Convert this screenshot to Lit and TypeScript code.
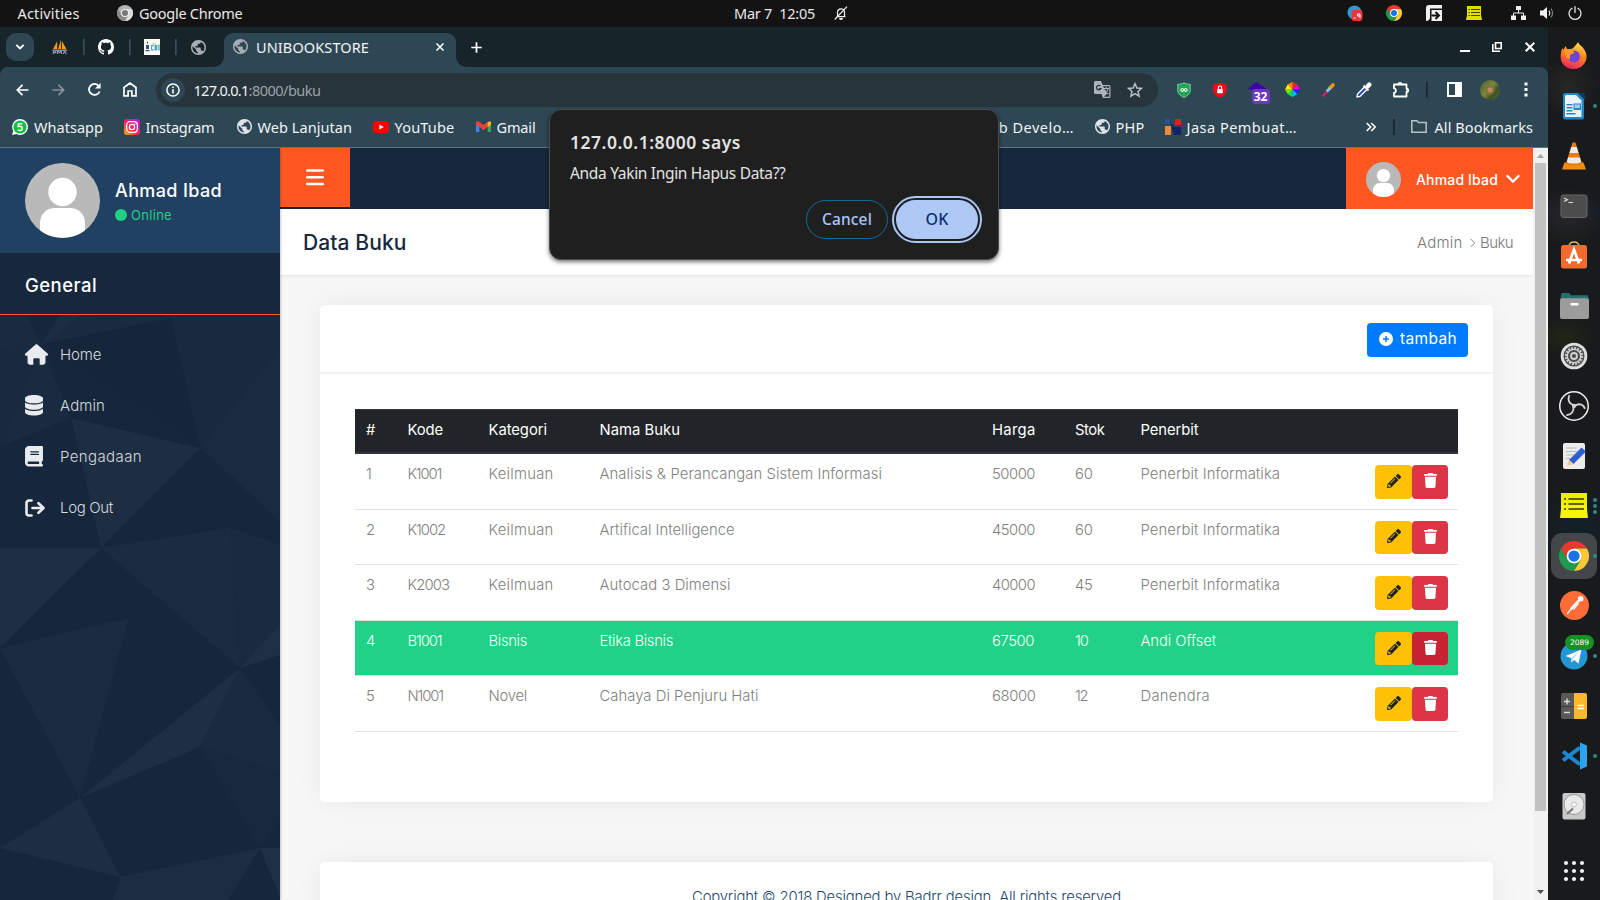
import { LitElement, html, css, svg } from "lit";
import { customElement, property } from "lit/decorators.js";
import { classMap } from "lit/directives/class-map.js";

/** Single line of text tracked so that it spans a given width. */
@customElement("fit-text")
class FitText extends LitElement {
  static styles = css`
    :host { display: inline-block; white-space: pre; justify-self: start; flex: none; }
  `;
  @property({ type: Number }) w = 0;
  updated() {
    this.style.letterSpacing = "0";
    const n = (this.textContent || "").length;
    const natural = this.getBoundingClientRect().width;
    if (this.w && n) this.style.letterSpacing = `${((this.w - natural) / n).toFixed(3)}px`;
  }
  render() { return html`<slot></slot>`; }
}

const t = (w: number, s: string) => html`<fit-text .w=${w}>${s}</fit-text>`;
const icon = (w: number, h: number, box: string, body: unknown) =>
  html`<svg width=${w} height=${h} viewBox=${box} fill="none">${body}</svg>`;

const chromeBody = (r: string, y: string, g: string, b: string) => svg`
  <path fill=${r} d="M12 6h10.4A12 12 0 0 0 1.6 6l5.2 9z"/>
  <path fill=${y} d="M12 6h10.4A12 12 0 0 1 12 24l5.2-9z"/>
  <path fill=${g} d="M6.8 15 1.6 6A12 12 0 0 0 12 24l5.2-9z"/>
  <circle cx="12" cy="12" r="5.9" fill="#fff"/><circle cx="12" cy="12" r="4.5" fill=${b}/>`;
const chrome = (s: number) => icon(s, s, "0 0 24 24", chromeBody("#e33b2e", "#fcc934", "#1e9b4c", "#1a73e8"));

const globe = (c: string) => icon(15, 15, "2 2 20 20", svg`<path fill=${c} d="M12 2C6.48 2 2 6.48 2 12s4.48 10 10 10 10-4.48 10-10S17.52 2 12 2zm-1 17.93c-3.95-.49-7-3.85-7-7.93 0-.62.08-1.21.21-1.79L9 15v1c0 1.1.9 2 2 2v1.93zm6.9-2.54c-.26-.81-1-1.39-1.9-1.39h-1v-3c0-.55-.45-1-1-1H8v-2h2c.55 0 1-.45 1-1V7h2c1.1 0 2-.9 2-2v-.41c2.93 1.19 5 4.06 5 7.41 0 2.08-.8 3.97-2.1 5.39z"/>`);

const github = icon(16, 16, "0 0 16 16", svg`<path fill="#fff" d="M8 0C3.58 0 0 3.58 0 8c0 3.54 2.29 6.53 5.47 7.59.4.07.55-.17.55-.38 0-.19-.01-.82-.01-1.49-2.01.37-2.53-.49-2.69-.94-.09-.23-.48-.94-.82-1.13-.28-.15-.68-.52-.01-.53.63-.01 1.08.58 1.23.82.72 1.21 1.87.87 2.33.66.07-.52.28-.87.51-1.07-1.78-.2-3.64-.89-3.64-3.95 0-.87.31-1.59.82-2.15-.08-.2-.36-1.02.08-2.12 0 0 .67-.21 2.2.82.64-.18 1.32-.27 2-.27s1.36.09 2 .27c1.53-1.04 2.2-.82 2.2-.82.44 1.1.16 1.92.08 2.12.51.56.82 1.27.82 2.15 0 3.07-1.87 3.75-3.65 3.95.29.25.54.73.54 1.48 0 1.07-.01 1.93-.01 2.2 0 .21.15.46.55.38A8.01 8.01 0 0 0 16 8c0-4.42-3.58-8-8-8z"/>`);
const pma = icon(16, 16, "0 0 17 16", svg`<path fill="#f89c0e" d="M1 10.5 5.5 2v8.500zM6.500 10.500 9.500 0v10.500zM10.500 10.500V1.500l5 9z"/><path stroke="#8d90b4" stroke-width="1.300" d="M.5 11.500h15.500M1.500 15.500v-3.500h2.500v2H2m4 1.500v-3.500l2 2 2-2v3.500m2 0 1.500-3.500 1.500 3.500"/>`);
const whiteTile = icon(16, 16, "0 0 16 16", svg`<path fill="#fdfdfd" d="M0 0h16v16H0z"/><path fill="#34507c" d="M3 2.500h1v2H3zM2 6h3v4H2zM1.500 11h4v1.200h-4z"/><path fill="#4fa3cf" d="M7 6h2.500v1.500H8V10h1.500v1.500H7zM10.500 6H13v5.500h-2.500z"/><path fill="#7fcbd0" d="M13.500 5.500H16v6h-2.500z"/><path fill="#a8cf5a" d="M8 4.500h4v1H8zM13 6h2v1h-2z"/>`);
const sep = (c: string) => icon(2, 16, "0 0 2 16", svg`<path fill=${c} d="M0 0h1.700v16H0z"/>`);
const bell = icon(14, 15, "0 0 14 15", svg`<path stroke="#eee" stroke-width="1.200" d="M2.500 10.700h9M3.500 10.500V6a3.600 3.600 0 0 1 7-.5v5M13 .7.700 13.500"/><path fill="#eee" d="M5 12h4a2 2 0 0 1-4 0z"/>`);

const avatar = (s: number) => icon(s, s, "0 0 75 75", svg`
  <circle cx="37.500" cy="37.500" r="37.500" fill="#b9b9b9"/><circle cx="37.500" cy="29" r="14.200" fill="#fff"/>
  <path fill="#fff" d="M15 67.300V60c0-9 7-15 15-15h15c8 0 15 6 15 15v7.300a37.500 37.500 0 0 1-45 0z"/>`);

const faHouse = icon(23, 21, "0 0 576 512", svg`<path fill="#e9ebee" d="M575.8 255.500c0 18-15 32.100-32 32.100h-32l.7 160.200c0 35-28 64-64 64H368V384c0-17.700-14.300-32-32-32h-96c-17.700 0-32 14.300-32 32v128H128c-36 0-64-29-64-64V287.600H32c-18 0-32-14-32-32.100 0-9 3-17 10-24L266.400 8c7-7 15-8 22-8s15 2 21 7L564.800 231.500c8 7 12 15 11 24z"/>`);
const faDb = icon(18, 20.500, "0 0 448 512", svg`<path fill="#e9ebee" d="M448 80v48c0 44.200-100.300 80-224 80S0 172.200 0 128V80C0 35.800 100.300 0 224 0S448 35.800 448 80zM393.200 214.700c20.800-7.400 39.900-16.900 54.800-28.600V288c0 44.200-100.300 80-224 80S0 332.200 0 288V186.100c14.900 11.800 34 21.200 54.800 28.600C99.700 230.700 159.500 240 224 240s124.300-9.300 169.200-25.300zM0 346.100c14.900 11.800 34 21.200 54.800 28.600C99.700 390.700 159.500 400 224 400s124.300-9.300 169.200-25.300c20.800-7.400 39.900-16.900 54.800-28.600V432c0 44.200-100.300 80-224 80S0 476.200 0 432V346.100z"/>`);
const faBook = icon(18, 20.500, "0 0 448 512", svg`<path fill="#e9ebee" d="M96 0C43 0 0 43 0 96V416c0 53 43 96 96 96H384h32c17.700 0 32-14.300 32-32s-14.300-32-32-32V384c17.700 0 32-14.300 32-32V32c0-17.700-14.300-32-32-32H384 96zm0 384H352v64H96c-17.700 0-32-14.300-32-32s14.300-32 32-32zm32-240c0-8.800 7.200-16 16-16H336c8.800 0 16 7.200 16 16s-7.200 16-16 16H144c-8.800 0-16-7.200-16-16zm16 48H336c8.800 0 16 7.200 16 16s-7.200 16-16 16H144c-8.800 0-16-7.200-16-16s7.200-16 16-16z"/>`);
const faOut = icon(20, 18, "0 0 20 18", svg`<path stroke="#e9ebee" stroke-width="2.600" stroke-linecap="round" stroke-linejoin="round" d="M6.500 1.500H4A2.500 2.500 0 0 0 1.500 4v10A2.500 2.500 0 0 0 4 16.500h2.500M7.500 9H18M13.500 4.200 18.500 9l-5 4.800"/>`);
const pencil = icon(14, 14, "0 0 512 512", svg`<path fill="#212529" d="M497.900 142.100l-46.100 46.100c-4.700 4.700-12.300 4.700-17 0l-111-111c-4.700-4.700-4.700-12.300 0-17l46.100-46.100c18.700-18.700 49.100-18.700 67.900 0l60.100 60.100c18.800 18.700 18.800 49.100 0 67.900zM284.200 99.800L21.600 362.400.4 483.900c-2.900 16.400 11.400 30.600 27.800 27.800l121.500-21.300 262.600-262.600c4.700-4.700 4.700-12.300 0-17l-111-111c-4.800-4.700-12.400-4.700-17.100 0zM124.100 339.900c-5.500-5.500-5.500-14.300 0-19.800l154-154c5.500-5.500 14.300-5.500 19.800 0s5.500 14.300 0 19.800l-154 154c-5.500 5.500-14.300 5.500-19.800 0zM88 424h48v36.300l-64.500 11.300-31.100-31.100L51.700 376H88v48z"/>`);
const trash = icon(13, 15, "0 0 448 512", svg`<path fill="#fff" d="M135.200 17.700L128 32H32C14.300 32 0 46.300 0 64S14.300 96 32 96H416c17.700 0 32-14.300 32-32s-14.300-32-32-32H320l-7.200-14.300C307.400 6.800 296.300 0 284.200 0H163.800c-12.100 0-23.200 6.800-28.600 17.700zM416 128H32L53.200 467c1.600 25.300 22.600 45 47.900 45H346.900c25.300 0 46.300-19.700 47.900-45L416 128z"/>`);

const shield = (a: string, b: string, mark: unknown) => icon(14, 16, "0 0 15 17", svg`<path fill=${a} stroke=${b} stroke-width="1" d="M7.500.8C5.500 2 3 2.400.8 2.400v6c0 4 3 6.600 6.700 8 3.700-1.400 6.700-4 6.700-8v-6C12 2.400 9.500 2 7.500.8z"/>${mark}`);

/* ---- dock icons, each drawn in a 28 unit square ---- */
const d = (body: unknown, s = 28) => icon(s, s, "0 0 28 28", body);
const dockIcons: { body: unknown; dots?: number; active?: boolean; badge?: string }[] = [
  { body: d(svg`<defs><linearGradient id="ff" x1=".7" y1="0" x2=".4" y2="1"><stop offset="0" stop-color="#ffe14a"/><stop offset=".45" stop-color="#ff8a1e"/><stop offset="1" stop-color="#f0245e"/></linearGradient></defs>
    <path fill="url(#ff)" d="M18 0c1 3 4 4 5.500 6.500 4 5 4 11 .5 15.500-4 5.500-12 6.500-17.500 3C1 22 0 16 1 11c.3-2.500 1-4 1.500-5l1 2 2-4 1.500 3h4c2-.5 3-2 4-3 1-1.500 2.500-2.500 3-4z"/>
    <circle cx="14" cy="14.500" r="6" fill="#7143d8"/><path fill="#ff9a1f" d="M5 9c3-1.500 6-1 9.500 1-1 2-4 2-4.500 3.500 0 2 0 3-.5 4C6 16 4.500 12.500 5 9z"/>`) },
  { dots: 1, body: d(svg`<path fill="#2387bf" d="M5 1h13l6 6v18.500a2 2 0 0 1-2 2H5a2 2 0 0 1-2-2V3a2 2 0 0 1 2-2z"/><path fill="#e9f3f9" d="M6 3h10l5.500 5.500V25H5V4z"/><path fill="#0d3d5e" d="M18 1h7v7z"/><path fill="#2a83bb" d="M6.500 12h6v1.400h-6zm0 3h6v1.400h-6zm0 3h6v1.400h-6zm0 3h9v1.400h-9zM13.500 11.500h7.500V18h-7.500z"/><path fill="#9cd0ee" d="M14.500 12.500H20V16h-5.500z"/>`) },
  { body: d(svg`<path fill="#f28b13" d="M4.500 20.500h19l2.500 7H2z"/><path fill="#e87b0a" d="M12.500.5h3L22 21.500c-3 2.500-13 2.500-16 0z"/><path fill="#ececec" d="M11.300 5h5.400l1.800 6h-9zM8.200 15.500h11.600l1.400 4.500c-3 2-11.500 2-14.400 0z"/>`) },
  { body: d(svg`<rect x="1" y="3" width="26" height="22.500" rx="2.500" fill="#4c4c4c" stroke="#686868"/><path stroke="#ddd" stroke-width="1.200" d="m4 6 3.500 1.700L4 9.500M8.500 10.500h4.500"/>`) },
  { body: d(svg`<path stroke="#d9bd8b" stroke-width="1.500" d="M9 4.500c0-6 10-6 10 0"/><rect x="1" y="3" width="26" height="23.500" rx="2.500" fill="#f26a2e"/><path stroke="#fff" stroke-width="2.700" d="m9 21.500 5-14 5 14M6 18h16"/>`) },
  { body: d(svg`<path fill="#24706c" d="M1 3.500A1.500 1.500 0 0 1 2.500 2h6L11 4h15a1.500 1.500 0 0 1 1.500 1.500V12H0z"/><rect y="7" width="28" height="20" rx="2" fill="#9c9c9c"/><rect x="10" y="11.500" width="8" height="2.400" rx="1" fill="#fff"/>`, 29) },
  { body: d(svg`<circle cx="14" cy="14" r="13.300" fill="#dedede"/><circle cx="14" cy="14" r="10.500" fill="#4b4b4b"/><circle cx="14" cy="14" r="8" stroke="#d2d2d2" stroke-width="2.200" stroke-dasharray="1.900 1.240"/><circle cx="14" cy="14" r="6.700" stroke="#d2d2d2" stroke-width="1.300"/><circle cx="14" cy="14" r="3" stroke="#d2d2d2" stroke-width="1.800"/>`) },
  { body: d(svg`<circle cx="14" cy="14" r="13.300" fill="#1b1b1d" stroke="#f2f2f2" stroke-width="1.400"/><path stroke="#d5d5d5" stroke-width="1.700" stroke-linecap="round" d="M13 13C9.500 12 8 8 9.500 4.500M13.500 15c.5 4-2 7-6 7.500M15.500 13.500c4-2.500 7.500-.5 8.500 2.500"/><circle cx="14" cy="14" r="2" fill="#d5d5d5"/>`, 30) },
  { body: d(svg`<rect x="3" y="1" width="22" height="26" rx="2" fill="#ececec"/><path stroke="#bbb" stroke-width="1.200" d="M6 6h11M6 9.500h11M6 13h8M6 16.500h6"/><path fill="#2d5fd0" d="m21.500 5.500 4.500 4L13.500 22 9 18z"/><path fill="#f4c68a" d="m9 18 4.500 4L7 24z"/>`) },
  { dots: 3, body: d(svg`<path fill="#f6f600" d="M1 1h26v16l1 9H0l1-9z"/><path fill="#dede00" d="M1 1h26v12H1z" opacity=".35"/><path stroke="#333300" stroke-width="1.400" d="M4 7h2M8.500 7H24M4 12h2M8.500 12H24M4 17h2M8.500 17H24"/>`) },
  { dots: 1, active: true, body: chrome(30) },
  { body: d(svg`<circle cx="14" cy="14" r="14" fill="#ff6c37"/><circle cx="20" cy="7.500" r="2.700" fill="#fff"/><path stroke="#fff" stroke-width="2.600" stroke-linecap="round" d="m17.500 10-6.500 7"/><path stroke="#fff" stroke-width="1.200" d="m18 12-5 6M11 17l-4 5"/>`, 29) },
  { dots: 1, badge: "2089", body: d(svg`<circle cx="14" cy="14" r="13.500" fill="#2496d3"/><path fill="#fff" d="m5.500 14 16-6.500-3 14-4.500-3.500-2.500 2.500-.5-4.500z"/><path fill="#b9d9ec" d="m11 16 8-6.500-6 7.500-1.500 3.500z"/>`) },
  { body: d(svg`<path fill="#595959" d="M3 1h11v26H3a2 2 0 0 1-2-2V3a2 2 0 0 1 2-2z"/><path fill="#fbb829" d="M14 1h11a2 2 0 0 1 2 2v22a2 2 0 0 1-2 2H14z"/><path stroke="#404040" d="M1 14.500h13"/><path stroke="#d8d8d8" stroke-width="1.400" d="M4 9.500h6M7 6.500v6M4 20.500h6"/><path stroke="#fff" stroke-width="1.400" d="M17.500 13.500H24M17.500 16.500H24"/>`) },
  { dots: 1, body: d(svg`<path stroke="#1d86d0" stroke-width="4" stroke-linejoin="round" d="M3 9.500 20 22.500M3 18.500 20 5.500"/><path fill="#2ba3ee" d="m20 .5 7 3v21l-7 3z"/>`) },
  { body: d(svg`<rect x="2.500" y="1" width="23" height="26.500" rx="2" fill="#c9c9c9"/><circle cx="14" cy="12.500" r="10" fill="#e9e9e9" stroke="#9a9a9a"/><circle cx="14" cy="12.500" r="2.500" fill="#fff" stroke="#bbb"/><path stroke="#777" stroke-width="2" d="m7 22 6-5.500"/>`) },
];

interface Cell { w: number; s: string }
const c = (w: number, s: string): Cell => ({ w, s });
const rows: { hot?: boolean; cells: Cell[] }[] = [
  { cells: [c(4.500, "1"), c(33.500, "K1001"), c(65, "Keilmuan"), c(282.500, "Analisis & Perancangan Sistem Informasi"), c(43, "50000"), c(17.500, "60"), c(139.500, "Penerbit Informatika")] },
  { cells: [c(8, "2"), c(37.500, "K1002"), c(65, "Keilmuan"), c(135, "Artifical Intelligence"), c(43, "45000"), c(17.500, "60"), c(139.500, "Penerbit Informatika")] },
  { cells: [c(8, "3"), c(41.500, "K2003"), c(65, "Keilmuan"), c(131, "Autocad 3 Dimensi"), c(43, "40000"), c(17.500, "45"), c(139.500, "Penerbit Informatika")] },
  { hot: true, cells: [c(8.500, "4"), c(34, "B1001"), c(38.500, "Bisnis"), c(73.500, "Etika Bisnis"), c(42, "67500"), c(13, "10"), c(75.500, "Andi Offset")] },
  { cells: [c(8, "5"), c(35.500, "N1001"), c(38.500, "Novel"), c(159, "Cahaya Di Penjuru Hati"), c(43.500, "68000"), c(12.500, "12"), c(69.500, "Danendra")] },
];
const heads = [c(11, "#"), c(35.500, "Kode"), c(58.500, "Kategori"), c(80.500, "Nama Buku"), c(43.500, "Harga"), c(29.500, "Stok"), c(58, "Penerbit")];

@customElement("app-root")
class AppRoot extends LitElement {
  static styles = css`
    :host { display: flex; flex-direction: column; width: 1600px; height: 900px; overflow: hidden; background: #17252b; font-family: "Noto Sans", "Open Sans", sans-serif; font-size: 14.5px; line-height: 20px; color: #f2f4f5; }
    * { box-sizing: border-box; }
    svg { display: block; flex: none; overflow: visible; }
    .topbar { display: grid; height: 27px; padding: 0 0 1px 17.5px; align-items: center; background: #131313; color: #e9e9e9; grid-template-columns: 99px 22.5px 595px 99.5px 513px 39px 40px 40px 45px 29px 28px 32px; }
    .desk { display: flex; flex: 1; min-height: 0; }
    .window { display: flex; flex-direction: column; width: 1548px; position: relative; background: #17252b; }
    .tabs { display: grid; flex: none; height: 40px; padding-left: 6px; align-items: center; grid-template-columns: 46px 31px 15px 31px 15px 31px 16px 33px 247px 989px 32px 33px 23px; }
    .search { display: grid; place-items: center; width: 28px; height: 28px; border-radius: 10px; background: #2d4753; }
    .tab { display: grid; grid-template-columns: 23px 180px 16px; align-items: center; align-self: end; width: 232px; height: 34px; padding: 0 0 7px 9px; border-radius: 9px 9px 0 0; background: #2e4754; position: relative; }
    .tab::before, .tab::after { content: ""; position: absolute; bottom: 0; width: 10px; height: 10px; }
    .tab::before { left: -10px; background: radial-gradient(circle at 0 0, transparent 9.5px, #2e4754 10px); }
    .tab::after { right: -10px; background: radial-gradient(circle at 100% 0, transparent 9.5px, #2e4754 10px); }
    .toolbar { display: grid; flex: none; height: 45px; padding-left: 15.5px; align-items: center; border-radius: 8px 8px 0 0; background: #2e4754; grid-template-columns: 36px 36px 35px 33px 1021px 36px 35px 37px 37px 34px 36px 34px 21px 33px 44px 20px; }
    .omni { display: grid; grid-template-columns: 33px 55px 845px 33px 20px; align-items: center; width: 1002px; height: 34px; padding-left: 5px; border-radius: 17px; background: #28343c; }
    .info { display: grid; place-items: center; width: 24px; height: 24px; border-radius: 50%; background: #2e4754; }
    .muted { color: #9aa3a8; }
    .purple { position: relative; }
    .count { position: absolute; left: 4px; top: 8px; width: 18px; height: 15px; border-radius: 3px; background: #6b39bd; color: #fff; font-size: 12px; line-height: 15px; font-weight: 700; text-align: center; }
    .photo { width: 20px; height: 20px; border-radius: 50%; background: radial-gradient(circle at 50% 50%, #b98c5e 0 2px, #8c6b42 3px, transparent 6px), linear-gradient(130deg, #3f5d2a, #7b8a3c 45%, #39501f 70%, #6f7d31); }
    .marks { display: grid; flex: none; height: 36px; padding: 0 0 6px 11.5px; align-items: center; background: #2e4754; grid-template-columns: 22.5px 89.5px 22px 91px 21px 115px 22px 81px 21px 458px 22px 118px 21px 49px 22px 179px 27px 18px 24px 110px; border-bottom: 1px solid #5f7179; }

    .page { display: flex; flex: 1; min-height: 0; font-family: Inter, "Open Sans", sans-serif; background: #f7f7f7; overflow: hidden; }
    .side { width: 280px; background: #16273c; flex: none; z-index: 1; box-shadow: 0 0 3px rgba(0, 0, 0, .35); }
    .profile { display: flex; gap: 15px; height: 105px; padding: 15px 25px; background: #214162; }
    .who { display: flex; flex-direction: column; gap: 4px; padding-top: 16px; font-size: 18px; font-weight: 500; line-height: 23px; color: #fff; }
    .online { display: flex; align-items: center; gap: 4px; font-size: 13px; line-height: 18px; color: #1fd085; font-weight: 400; }
    .dot { width: 12px; height: 12px; border-radius: 50%; background: #20cf84; }
    .general { height: 62px; padding: 20px 25px; font-size: 18.5px; font-weight: 500; line-height: 24px; color: #fff; background: #17283c; border-bottom: 1px solid #ff5722; }
    .menuwrap { position: relative; }
    .poly { position: absolute; inset: 0; }
    .menu { position: relative; display: flex; flex-direction: column; padding-top: 14px; }
    .item { display: grid; grid-template-columns: 35px 1fr; align-items: center; height: 51px; padding-left: 25px; font-size: 15px; font-weight: 300; color: #d6dade; }
    .main { width: 1253px; flex: none; display: flex; flex-direction: column; }
    .nav { display: flex; flex: none; justify-content: space-between; height: 61px; background: #17283e; }
    .burger { display: grid; place-items: center; width: 70px; height: 59px; background: #ff5722; }
    .user { display: grid; grid-template-columns: 50px 90px 20px; align-items: center; width: 187px; height: 61px; padding: 2px 0 0 20px; background: #ff5722; color: #fff; font-size: 14px; font-weight: 500; }
    .title { display: flex; flex: none; justify-content: space-between; align-items: center; height: 66px; padding: 1px 20px 0 23px; background: #fff; color: #17283e; font-size: 21px; line-height: 28px; font-weight: 450; box-shadow: 0 1px 3px rgba(0, 0, 0, .09); }
    .crumbs { display: grid; grid-template-columns: 53px 10px 33px; font-size: 15px; font-weight: 300; color: #777; }
    .content { display: flex; flex-direction: column; gap: 60px; padding: 30px 40px 0; }
    .card { height: 497px; border-radius: 5px; background: #fff; box-shadow: 0 0 30px rgba(0, 0, 0, .065); flex: none; }
    .cardhead { display: flex; justify-content: flex-end; height: 69px; padding: 18px 25px 0; border-bottom: 2px solid #f1f1f2; }
    .add { display: grid; grid-template-columns: 21px 60px; align-items: center; width: 101px; height: 34px; padding: 0 0 3px 12px; border-radius: 4px; background: #007bff; color: #fff; font-size: 15.5px; font-weight: 400; }
    .table { padding: 35px 35px 0; }
    .row { display: grid; grid-template-columns: 41.5px 81px 111px 392.5px 83px 65.5px 196.5px 121px; height: 55.6px; padding: 9px 0 0 11px; line-height: 22px; border-bottom: 1px solid #dee2e6; color: #808080; font-size: 14.8px; font-weight: 300; }
    .head { height: 45px; padding-top: 9px; background: #212529; border-top: 1px solid #32383e; border-bottom: 2px solid #32383e; color: #fff; font-weight: 400; }
    .hot { background: #20d187; color: #f4fffa; }
    .acts { display: flex; padding: 2px 0 0 38px; }
    .btn { display: grid; place-items: center; height: 33.5px; border-radius: 4px; padding-bottom: 2px; }
    .edit { width: 37px; background: #ffc107; }
    .del { width: 36px; background: #dc3545; }
    .hot .del { background: #c82333; }
    .foot { display: flex; justify-content: center; height: 90px; padding-top: 25px; border-radius: 5px; background: #fff; color: #24486c; font-size: 14.8px; font-weight: 300; box-shadow: 0 0 30px rgba(0, 0, 0, .065); }
    .scroll { display: flex; flex-direction: column; align-items: center; justify-content: space-between; width: 15px; background: #f1f1f1; padding: 5px 0 5px; }
    .thumb { width: 11px; height: 648px; margin: 5px 2px auto; background: #c1c1c1; }

    .dialog { position: absolute; left: 549px; top: 82px; width: 450px; height: 151px; display: flex; flex-direction: column; padding: 22px 16px 16px 20px; border: 1px solid #4b4c4d; border-radius: 12px; background: #1f1f1f; color: #e3e3e3; box-shadow: 0 2px 4px rgba(0, 0, 0, .55); }
    .says { font-size: 17.5px; font-weight: 600; line-height: 20px; height: 30px; }
    .ask { font-size: 15.5px; line-height: 22px; }
    .choices { display: flex; justify-content: flex-end; gap: 4px; margin-top: 12px; align-items: center; }
    .cancel { display: grid; place-items: center; width: 82px; height: 39px; padding-bottom: 2px; border: 1px solid #0e6c9c; border-radius: 20px; color: #a8c7fa; font-weight: 500; font-size: 15.5px; }
    .ok { display: grid; place-items: center; width: 90px; height: 47px; border: 2px solid #a8c7fa; border-radius: 24px; padding: 2px; }
    .okin { display: grid; place-items: center; width: 100%; height: 100%; padding-bottom: 2px; border-radius: 20px; background: #afc9f7; color: #0b2f71; font-weight: 500; font-size: 16px; }
    .choices fit-text { justify-self: center; }

    .dock { display: flex; flex-direction: column; align-items: center; width: 52px; padding-top: 3.5px; background: radial-gradient(ellipse 30px 30px at 20px 60px, #272727, transparent), radial-gradient(ellipse 34px 30px at 20px 190px, #252525, transparent), radial-gradient(ellipse 40px 20px at 24px 185px, #172036, transparent), radial-gradient(ellipse 30px 20px at 16px 310px, #222616, transparent), radial-gradient(ellipse 40px 50px at 30px 500px, #12212a, transparent), #191a1b; }
    .slot { display: grid; place-items: center; position: relative; flex: none; width: 46px; height: 50px; }
    .active::before { content: ""; position: absolute; inset: 2px 0; border-radius: 11px; background: #44474a; }
    .slot svg { position: relative; }
    .dots { position: absolute; right: 0; top: 0; height: 50px; display: flex; flex-direction: column; justify-content: center; gap: 2px; }
    .run { width: 4px; height: 4px; border-radius: 50%; background: #2f8a85; }
    .badge { position: absolute; left: 14px; top: 4px; width: 29px; height: 15px; border-radius: 8px; background: #149324; color: #fff; font: 500 7.5px/15px "DejaVu Sans", sans-serif; text-align: center; }
    .grid { margin-top: 30px; }
  `;

  private polys() {
    const p: [string, string][] = [
      ["0,0 27,0 41,30 0,34", "#1a2b40"], ["41,30 60,0 83,0", "#1c2e42"], ["41,30 171,3 83,0", "#1a2b40"],
      ["171,3 280,33 200,133", "#192a3f"], ["280,33 280,151 200,133", "#1a2c41"], ["171,3 160,0 280,0 280,33", "#182a3f"],
      ["41,30 71,103 0,132", "#192b40"], ["0,34 41,30 0,132", "#172a3f"], ["41,30 171,3 200,133", "#15263b"], ["71,103 200,133 101,233", "#1d2e43"],
      ["200,133 280,151 280,206", "#1a2c41"], ["0,132 71,103 101,233", "#16273d"], ["0,233 101,233 0,333", "#1d2f44"],
      ["101,233 231,213 240,353", "#1b2c42"], ["231,213 280,230 280,309 240,353", "#1a2b40"],
      ["240,353 280,309 280,340", "#1e3045"], ["0,333 129,303 80,483", "#1a2c41"], ["129,303 240,353 80,483", "#15273c"],
      ["240,353 200,432 80,483", "#1e2f44"], ["240,353 280,412 280,459 200,432", "#1a2b40"],
      ["80,483 120,562 0,533", "#1d2e43"], ["120,562 260,533 228,586 113,586", "#1b2d42"],
      ["260,533 280,533 280,582", "#1e3045"], ["200,432 280,459 280,505 260,533", "#17293e"],
    ];
    return html`<svg class="poly" width="280" height="585" viewBox="0 0 280 585">${p.map(([pts, f]) => svg`<polygon points=${pts} fill=${f}/>`)}</svg>`;
  }

  private topbar() {
    return html`<div class="topbar">
      ${t(62, "Activities")}
      ${icon(16, 16, "0 0 24 24", svg`<circle cx="12" cy="12" r="12" fill="#b3b3b3"/><path fill="#8a8a8a" d="M6.800 15 1.600 6A12 12 0 0 0 12 24l5-9z"/><path fill="#dcdcdc" d="M12 6h10.400A12 12 0 0 1 12 24l5.200-9z"/><circle cx="12" cy="12" r="6" fill="#eee"/><circle cx="12" cy="12" r="4.500" fill="#777"/>`)}
      ${t(103.500, "Google Chrome")}
      ${t(81, "Mar 7  12:05")}
      ${bell}
      ${icon(16, 16, "0 0 16 16", svg`<circle cx="7.500" cy="7.500" r="7" fill="#2f9bd6"/><rect x="4.500" y="5" width="11" height="11" rx="3" fill="#e53935"/><path stroke="#fff" stroke-width="1" d="M6.500 13h2M13 13V9h-2.500v2H13"/>`)}
      ${chrome(16)}
      ${icon(16, 16, "0 0 16 16", svg`<path fill="#f0f0f0" d="M3 0h13v3.500H4V12c0 2.500-1.500 4-4 4V3a3 3 0 0 1 3-3z"/><path fill="#f0f0f0" d="M5.500 5H16v11H5.500z"/><path stroke="#131313" stroke-width="2" d="M5.500 10.500h7M9.500 7l3.500 3.500L9.500 14"/>`)}
      ${icon(16, 16, "0 0 16 16", svg`<path fill="#e0e000" d="M1 1h14v9l1 5H0l1-5z"/><path stroke="#444400" stroke-width="1" d="M2.500 4.500h1.500M5 4.500h9M2.500 7.500h1.500M5 7.500h9M2.500 10.500h1.500M5 10.500h9"/>`)}
      ${icon(15, 14, "0 0 15 14", svg`<path fill="#f2f2f2" d="M5 0h5v4H5zM0 9.500h5V14H0zM10 9.500h5V14h-5z"/><path stroke="#f2f2f2" d="M7.500 4v3M2.500 10V7h10v3"/>`)}
      ${icon(14, 14, "0 0 14 14", svg`<path fill="#f2f2f2" d="M0 4.500h3L7 1v12L3 9.500H0z"/><path stroke="#f2f2f2" stroke-width="1.100" d="M9 4.500c1 1.500 1 3.500 0 5"/><path stroke="#888" stroke-width="1.100" d="M11 2.500c2 2.500 2 6.500 0 9"/>`)}
      ${icon(14, 14, "0 0 14 14", svg`<path stroke="#f2f2f2" stroke-width="1.200" stroke-linecap="round" d="M4 2.200a6 6 0 1 0 6 0M7 .5v6"/>`)}
    </div>`;
  }

  private chromeRows() {
    return html`
      <div class="tabs">
        <div class="search">${icon(10, 8, "0 0 10 8", svg`<path stroke="#fff" stroke-width="1.900" d="m1.300 1.800 3.700 3.700 3.700-3.700"/>`)}</div>
        ${pma}${sep("#34505d")}${github}${sep("#34505d")}${whiteTile}${sep("#34505d")}${globe("#a7adb3")}
        <div class="tab">${globe("#a7adb3")}${t(113, "UNIBOOKSTORE")}${icon(8, 8, "0 0 8 8", svg`<path stroke="#fff" stroke-width="1.600" d="m.5.5 7 7m0-7-7 7"/>`)}</div>
        ${icon(11, 11, "0 0 11 11", svg`<path stroke="#fff" stroke-width="1.700" d="M.3 5.500h10.400M5.500.3v10.400"/>`)}
        ${icon(10, 10, "0 0 10 10", svg`<path fill="#fff" d="M0 8h10v2H0z"/>`)}
        ${icon(10, 10, "0 0 10 10", svg`<path stroke="#fff" stroke-width="1.600" d="M3.500.8h5.700v5.700H3.500zM.8 2v7.200H8"/>`)}
        ${icon(10, 10, "0 0 10 10", svg`<path stroke="#fff" stroke-width="2" d="m.7.700 8.600 8.600m0-8.600L.7 9.300"/>`)}
      </div>`;
  }

  private toolbar() {
    return html`<div class="toolbar">
      ${icon(13, 12, "0 0 13 12", svg`<path stroke="#fff" stroke-width="1.700" d="M12.500 6H1.500M6.500.8 1.300 6l5.200 5.200"/>`)}
      ${icon(13, 12, "0 0 13 12", svg`<path stroke="#87949b" stroke-width="1.700" d="M.5 6h11M6.500.8 11.700 6l-5.200 5.200"/>`)}
      ${icon(13, 13, "0 0 13 13", svg`<path stroke="#fff" stroke-width="1.800" d="M11.600 8.500A5.500 5.500 0 1 1 10.800 3"/><path fill="#fff" d="M12.600 0v5.500H7z"/>`)}
      ${icon(14, 15, "0 0 14 15", svg`<path stroke="#fff" stroke-width="1.700" d="M1 13.800V5.500L7 1l6 4.500v8.300H8.900V9H5.100v4.800z"/>`)}
      <div class="omni">
        <div class="info">${icon(14, 14, "0 0 14 14", svg`<circle cx="7" cy="7" r="6.100" stroke="#fff" stroke-width="1.500"/><path fill="#fff" d="M6.200 6.200h1.600v4.300H6.200zM6.200 3.500h1.600v1.600H6.200z"/>`)}</div>
        ${t(55, "127.0.0.1")}<span class="muted">${t(72, ":8000/buku")}</span>
        ${icon(17, 17, "0 0 17 17", svg`<path fill="#aeb4b9" d="M1.500 0H7l1.500 4H15a1.500 1.500 0 0 1 1.500 1.500v10A1.500 1.500 0 0 1 15 17H9l-1.500-4h-6A1.500 1.500 0 0 1 0 11.500v-10A1.500 1.500 0 0 1 1.500 0z"/><path fill="#28343c" d="M9 5.200h6.300v10.600H10l3-3z"/><path stroke="#28343c" stroke-width="1.200" d="M6.500 5A2.300 2.300 0 1 0 7 7.500H4.800"/><path stroke="#aeb4b9" stroke-width="1.100" d="M9.500 7.500H15M12.200 6v1.500M14 8c-.5 2.500-2 4-3.500 5M10.500 9c1 2 2.500 3.500 4 4.200"/>`)}
        ${icon(16, 16, "0 0 16 16", svg`<path stroke="#b9bfc3" stroke-width="1.500" d="m8 1.700 1.900 4.300 4.600.4-3.500 3.100 1.100 4.600L8 11.700l-4.100 2.400L5 9.500 1.500 6.400 6.100 6z"/>`)}
      </div>
      ${shield("#1fa554", "#7fd19e", svg`<path stroke="#fff" stroke-width="1.100" d="M4 8.500c1-2 2.500-2 3.500 0s2.500 2 3.500 0c-1-2-2.500-2-3.500 0s-2.500 2-3.500 0z"/>`)}
      ${shield("#f00a14", "#f00a14", svg`<rect x="4.500" y="7.500" width="6" height="4.500" rx=".5" fill="#fff"/><path stroke="#fff" stroke-width="1.200" d="M5.700 7.500V6a1.800 1.800 0 0 1 3.600 0v1.500"/>`)}
      <div class="purple">${icon(18, 18, "0 0 18 18", svg`<path fill="#4100a8" d="M8.500 1 18 7.500l-4 1.500v8H4V9L0 7.500z"/>`)}<span class="count">32</span></div>
      ${icon(15, 15, "0 0 16 16", svg`<path fill="#f22" d="M8 8V0l5 2.500z"/><path fill="#f0c" d="M8 8l5-5.500 3 5.500z"/><path fill="#22f" d="M8 8h8l-3 5z"/><path fill="#0bf" d="M8 8l5 5-5 3z"/><path fill="#0d6" d="M8 8v8l-5-3z"/><path fill="#7e0" d="M8 8l-5 5-3-5z"/><path fill="#fe0" d="M8 8H0l3-5.500z"/><path fill="#f80" d="M8 8 3 2.500 8 0z"/>`)}
      ${icon(13, 14, "0 0 13 14", svg`<path stroke="#ff9500" stroke-width="3.600" stroke-linecap="round" d="m8 5 3-3"/><path stroke="#7cc6f5" stroke-width="3" d="M4.500 8.800 8 5.200"/><path stroke="#e3146c" stroke-width="2.200" stroke-linecap="round" d="m1.200 12.700 3-3.500"/>`)}
      ${icon(16, 16, "0 0 16 16", svg`<path stroke="#fff" stroke-width="4.500" stroke-linecap="round" d="m11.500 4.500 1.800-1.800"/><path stroke="#fff" stroke-width="1.800" d="m7.500 3.500 5 5"/><path fill="#3450b8" stroke="#fff" stroke-width="1.300" d="m8.500 5 2.500 2.500-7 7-3 .5.500-3z"/>`)}
      ${icon(17, 17, "0 0 17 17", svg`<path stroke="#fff" stroke-width="1.800" stroke-linejoin="round" d="M2 3.500h12.500v4.200c2.300 0 2.300 3.300 0 3.300v4.500H2v-3.700c2.500 0 2.500-4.500 0-4.500z"/><path fill="#fff" d="M5.500 3.500a2.500 2.500 0 0 1 5 0z M14.500 7.500a2 2 0 0 1 0 4z"/>`)}
      ${sep("#17262e")}
      ${icon(15, 15, "0 0 15 15", svg`<path stroke="#fff" stroke-width="1.900" d="M1 1h13v13H1z"/><path fill="#fff" d="M8 1h6v13H8z"/>`)}
      <div class="photo"></div>
      ${icon(4, 15, "0 0 4 15", svg`<path fill="#fff" d="M.5.500h3v3h-3zM.5 6h3v3h-3zM.5 11.500h3v3h-3z"/>`)}
    </div>`;
  }

  private bookmarks() {
    return html`<div class="marks">
      ${icon(16, 16, "0 0 16 16", svg`<path fill="#fff" d="M8 0a8 8 0 1 1-3.600 15.100L0 16l1.200-4A8 8 0 0 1 8 0z"/><circle cx="8" cy="8" r="6.600" fill="#10c143"/><path stroke="#fff" stroke-width="1.500" d="M10.300 4.800H6.500L6.200 7.500c2-.7 4 0 4 1.900 0 2.100-2.700 2.600-4.300 1.400"/>`)}
      ${t(69, "Whatsapp")}
      ${icon(16, 16, "0 0 16 16", svg`<defs><linearGradient id="ig" x1="0" y1="1" x2="1" y2="0"><stop offset="0" stop-color="#ffb400"/><stop offset=".45" stop-color="#ff1f5a"/><stop offset="1" stop-color="#a41cf0"/></linearGradient></defs><rect width="16" height="16" rx="3" fill="url(#ig)"/><rect x="2.700" y="2.700" width="10.600" height="10.600" rx="3" stroke="#fff" stroke-width="1.200"/><circle cx="8" cy="8" r="2.600" stroke="#fff" stroke-width="1.200"/><circle cx="11" cy="5" r=".7" fill="#fff"/>`)}
      ${t(69, "Instagram")}
      ${globe("#dfe3e8")}${t(94.500, "Web Lanjutan")}
      ${icon(16, 12, "0 0 16 12", svg`<rect width="16" height="12" rx="3" fill="#f00"/><path fill="#fff" d="m6.300 3.400 4.500 2.600-4.500 2.600z"/>`)}
      ${t(60, "YouTube")}
      ${icon(15, 11, "0 0 15 11", svg`<path fill="#4285f4" d="M0 2h3.300v9H1a1 1 0 0 1-1-1z"/><path fill="#34a853" d="M11.700 2H15v8a1 1 0 0 1-1 1h-2.300z"/><path fill="#ea4335" d="M0 2C0 0 2 0 3 .7L7.500 4 12 .7C13 0 15 0 15 2v1.500L7.500 9 0 3.500z"/><path fill="#fbbc04" d="M11.700 1 15 .7v3L11.700 6z"/>`)}
      ${t(39, "Gmail")}
      ${globe("#dfe3e8")}${t(97.500, "Web Develo…")}
      ${globe("#dfe3e8")}${t(29, "PHP")}
      ${icon(16, 16, "0 0 16 16", svg`<path fill="#2d4c9b" d="M0 0h5v5H0z"/><path fill="#e01d1d" d="M10 0h6v6h-6z"/><path fill="#f08a35" d="M0 7h6v9H0z"/><path fill="#0f2568" d="M5 3l4 5h7v8H9L7 9z"/>`)}
      ${t(110.500, "Jasa Pembuat…")}
      ${icon(10, 10, "0 0 10 10", svg`<path stroke="#fff" stroke-width="1.600" d="m.7 1 4 4-4 4M5.200 1l4 4-4 4"/>`)}
      ${sep("#17262e")}
      ${icon(16, 13, "0 0 16 13", svg`<path stroke="#b9c1c6" stroke-width="1.500" d="M.8.8h5l1.700 1.800h7.700v9.600H.8z"/>`)}
      ${t(98.500, "All Bookmarks")}
    </div>`;
  }

  private item(ic: unknown, w: number, s: string) {
    return html`<div class="item">${ic}${t(w, s)}</div>`;
  }

  render() {
    return html`
      ${this.topbar()}
      <div class="desk">
        <div class="window">
          ${this.chromeRows()}${this.toolbar()}${this.bookmarks()}
          <div class="page">
            <div class="side">
              <div class="profile">${avatar(75)}
                <div class="who">${t(107, "Ahmad Ibad")}<div class="online"><span class="dot"></span>${t(41, "Online")}</div></div>
              </div>
              <div class="general">${t(72, "General")}</div>
              <div class="menuwrap">${this.polys()}
                <div class="menu">
                  ${this.item(faHouse, 41.500, "Home")}${this.item(faDb, 45, "Admin")}
                  ${this.item(faBook, 82, "Pengadaan")}${this.item(faOut, 53, "Log Out")}
                </div>
              </div>
            </div>
            <div class="main">
              <div class="nav">
                <div class="burger">${icon(18, 17, "0 0 18 17", svg`<path stroke="#fff" stroke-width="2.500" stroke-linecap="round" d="M1.200 1.500h15.600M1.200 8.300h15.600M1.200 15.100h15.600"/>`)}</div>
                <div class="user">${avatar(35)}${t(82, "Ahmad Ibad")}${icon(14, 9, "0 0 14 9", svg`<path stroke="#fff" stroke-width="2.400" stroke-linecap="round" d="m1.400 1 5.600 5.500L12.600 1"/>`)}</div>
              </div>
              <div class="title">${t(103.500, "Data Buku")}
                <div class="crumbs">${t(45.500, "Admin")}<span>${icon(6, 28, "0 0 6 28", svg`<path stroke="#888" d="m.7 10 4 4-4 4"/>`)}</span>${t(33, "Buku")}</div>
              </div>
              <div class="content">
                <div class="card">
                  <div class="cardhead"><div class="add">${icon(14, 14, "0 0 14 14", svg`<circle cx="7" cy="7" r="7" fill="#fff"/><path stroke="#007bff" stroke-width="1.500" d="M4 7h6M7 4v6"/>`)}${t(57, "tambah")}</div></div>
                  <div class="table">
                    <div class="row head">${heads.map((h) => t(h.w, h.s))}</div>
                    ${rows.map((r) => html`<div class=${classMap({ row: true, hot: !!r.hot })}>
                      ${r.cells.map((x) => t(x.w, x.s))}
                      <div class="acts"><span class="btn edit">${pencil}</span><span class="btn del">${trash}</span></div>
                    </div>`)}
                  </div>
                </div>
                <div class="foot">${t(429, "Copyright © 2018 Designed by Badrr design. All rights reserved")}</div>
              </div>
            </div>
            <div class="scroll">
              ${icon(7, 5, "0 0 7 5", svg`<path fill="#a3a3a3" d="M0 5 3.500 1 7 5z"/>`)}
              <div class="thumb"></div>
              ${icon(7, 5, "0 0 7 5", svg`<path fill="#505050" d="M0 0h7L3.500 4z"/>`)}
            </div>
          </div>
          <div class="dialog">
            <div class="says">${t(171, "127.0.0.1:8000 says")}</div>
            <div class="ask">${t(215.500, "Anda Yakin Ingin Hapus Data??")}</div>
            <div class="choices"><div class="cancel">${t(50, "Cancel")}</div><div class="ok"><div class="okin">${t(23, "OK")}</div></div></div>
          </div>
        </div>
        <div class="dock">
          ${dockIcons.map((x) => html`<div class=${classMap({ slot: true, active: !!x.active })}>${x.body}
            ${x.dots ? html`<div class="dots">${Array.from({ length: x.dots }, () => html`<span class="run"></span>`)}</div>` : ""}
            ${x.badge ? html`<span class="badge">${x.badge}</span>` : ""}</div>`)}
          <svg class="grid" width="20" height="20" viewBox="0 0 20 20">${[2, 10, 18].map((y) => [2, 10, 18].map((x) => svg`<circle cx=${x} cy=${y} r="2.100" fill="#f0f0f0"/>`))}</svg>
        </div>
      </div>`;
  }
}
